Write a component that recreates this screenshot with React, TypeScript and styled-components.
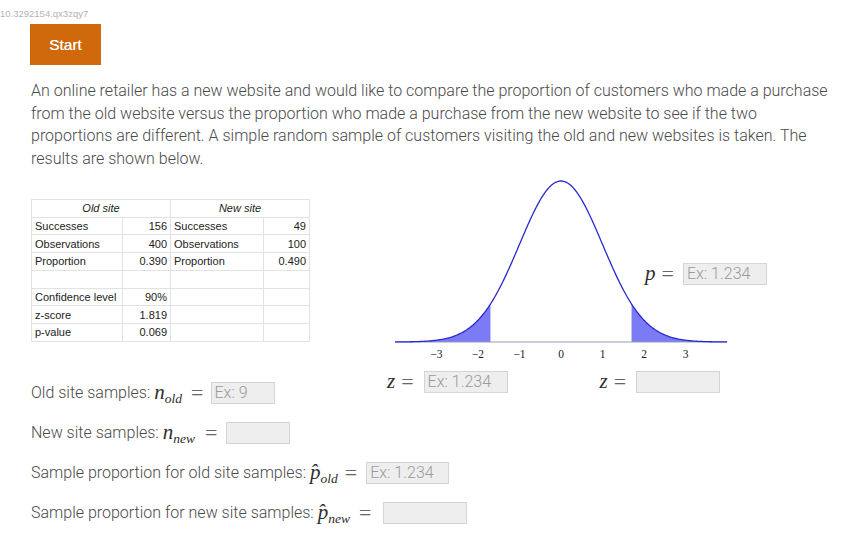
import React from "react";
import styled, { createGlobalStyle } from "styled-components";

const Global = createGlobalStyle`
  html, body { margin: 0; padding: 0; background: #fff; }
  body { font-family: Roboto, "Liberation Sans", Arial, sans-serif; }
`;

const Page = styled.div`
  width: 844px;
  box-sizing: border-box;
  padding: 0 12px 0 31px;
`;

const IdTag = styled.div`
  margin-left: -31px;
  padding-top: 8px;
  font-family: "Liberation Sans", Arial, sans-serif;
  font-size: 9.5px;
  line-height: 12px;
  color: #b3b3b3;
`;

const StartButton = styled.button`
  display: block;
  margin: 4px 0 0 -1px;
  width: 71px;
  height: 41px;
  border: none;
  background: #d0690b;
  color: #fff;
  font-family: "Liberation Sans", Arial, sans-serif;
  font-size: 15.5px;
  padding: 0;
  text-shadow: 0 0 0.4px #fff;
`;

const Intro = styled.p`
  margin: 15px 0 0;
  font-weight: 300;
  font-size: 16px;
  line-height: 22.7px;
  color: #4a4a4a;
`;

const Workspace = styled.div`
  display: flow-root;
`;

const Figure = styled.div`
  float: right;
  position: relative;
  width: 400px;
  margin: 4px 47px 0 0;
`;

const ChartSvg = styled.svg`
  display: block;
`;

const ZRow = styled.div`
  display: flex;
  gap: 92px;
  margin: 3px 0 0 2px;
`;

const MathPair = styled.div`
  display: flex;
  align-items: center;
`;

const Overlay = styled.div`
  position: absolute;
  left: 260px;
  top: 86px;
  display: flex;
  align-items: center;
`;

const DataTable = styled.table`
  margin-top: 28px;
  border-collapse: collapse;
  font-family: "Liberation Sans", Arial, sans-serif;
  font-size: 11px;
  color: #222;
  td {
    border: 1px solid #e2e2e2;
    height: 16.75px;
    padding: 0 3px;
    line-height: 14px;
  }
`;

const Cell = styled.td<{ $w?: number; $align?: string; $italic?: boolean }>`
  width: ${(p) => (p.$w ? `${p.$w - 7}px` : "auto")};
  text-align: ${(p) => p.$align || "left"};
  font-style: ${(p) => (p.$italic ? "italic" : "normal")};
`;

const Questions = styled.div`
  margin-top: 31px;
`;

const QRow = styled.div`
  display: flex;
  align-items: center;
  height: 40px;
  font-weight: 300;
  font-size: 16px;
  color: #4a4a4a;
`;

const MathVar = styled.span<{ $lead?: number }>`
  font-family: "Liberation Serif", "DejaVu Serif", serif;
  font-style: italic;
  font-size: 21px;
  color: #2e2e2e;
  margin-left: ${(p) => p.$lead ?? 4}px;
`;

const Sub = styled.sub`
  font-size: 13.5px;
  vertical-align: -4px;
  line-height: 0;
`;

const Eq = styled.span<{ $l?: number; $r?: number }>`
  font-family: "Liberation Serif", "DejaVu Serif", serif;
  font-size: 22px;
  color: #666;
  margin: 0 ${(p) => p.$r ?? 9}px 0 ${(p) => p.$l ?? 9}px;
`;

const AnswerBox = styled.input<{ $w: number }>`
  box-sizing: border-box;
  width: ${(p) => p.$w}px;
  height: 22px;
  background: #eeeeee;
  border: 1px solid #d4d4d4;
  padding: 0 3px;
  font-family: Roboto, "Liberation Sans", sans-serif;
  font-weight: 300;
  font-size: 16px;
  color: #555;
  &::placeholder { color: #9a9a9a; }
`;

const pdf = (z: number) => Math.exp(-(z * z) / 2) / Math.sqrt(2 * Math.PI);
const toX = (z: number) => 176 + 41.5 * z;
const BASE = 167;
const toY = (z: number) => BASE - 403.6 * pdf(z);

function pts(a: number, b: number) {
  const out: string[] = [];
  const n = Math.round((b - a) / 0.02);
  for (let i = 0; i <= n; i++) {
    const z = a + ((b - a) * i) / n;
    out.push(`${toX(z).toFixed(2)},${toY(z).toFixed(2)}`);
  }
  return out;
}

const CUT = 1.7;

function BellChart() {
  const curve = "M" + pts(-4, 4).join(" L");
  const left = `M${toX(-4)},${BASE} L` + pts(-4, -CUT).join(" L") + ` L${toX(-CUT)},${BASE} Z`;
  const right = `M${toX(CUT)},${BASE} L` + pts(CUT, 4).join(" L") + ` L${toX(4)},${BASE} Z`;
  const ticks = [-3, -2, -1, 0, 1, 2, 3];
  return (
    <ChartSvg width={400} height={191} viewBox="0 0 400 191">
      <path d={left} fill="#7b7bf5" />
      <path d={right} fill="#7b7bf5" />
      <line x1={toX(-4)} x2={toX(4)} y1={BASE} y2={BASE} stroke="#9a9ab8" strokeWidth={1} />
      <path d={curve} fill="none" stroke="#2a2ad0" strokeWidth={1.3} />
      {ticks.map((t) => (
        <text
          key={t}
          x={toX(t)}
          y={183}
          textAnchor="middle"
          fontFamily="'Liberation Serif', serif"
          fontSize={11.5}
          fill="#222"
        >
          {t < 0 ? `\u2212${-t}` : t}
        </text>
      ))}
    </ChartSvg>
  );
}

const rows: [string, string, string, string][] = [
  ["Successes", "156", "Successes", "49"],
  ["Observations", "400", "Observations", "100"],
  ["Proportion", "0.390", "Proportion", "0.490"],
  ["", "", "", ""],
  ["Confidence level", "90%", "", ""],
  ["z-score", "1.819", "", ""],
  ["p-value", "0.069", "", ""],
];

export default function App() {
  return (
    <>
      <Global />
      <Page>
        <IdTag>10.3292154.qx3zqy7</IdTag>
        <StartButton>Start</StartButton>
        <Intro>
          An online retailer has a new website and would like to compare the proportion of customers who made a purchase
          from the old website versus the proportion who made a purchase from the new website to see if the two
          proportions are different. A simple random sample of customers visiting the old and new websites is taken. The
          results are shown below.
        </Intro>
        <Workspace>
          <Figure>
            <BellChart />
            <Overlay>
              <MathVar $lead={0}>p</MathVar>
              <Eq $l={6} $r={9}>=</Eq>
              <AnswerBox $w={84} placeholder="Ex: 1.234" />
            </Overlay>
            <ZRow>
              <MathPair>
                <MathVar $lead={0}>z</MathVar>
                <Eq $l={6} $r={10}>=</Eq>
                <AnswerBox $w={84} placeholder="Ex: 1.234" />
              </MathPair>
              <MathPair>
                <MathVar $lead={0}>z</MathVar>
                <Eq $l={6} $r={10}>=</Eq>
                <AnswerBox $w={84} />
              </MathPair>
            </ZRow>
          </Figure>
          <DataTable>
            <tbody>
              <tr>
                <Cell colSpan={2} $align="center" $italic>Old site</Cell>
                <Cell colSpan={2} $align="center" $italic>New site</Cell>
              </tr>
              {rows.map((r, i) => (
                <tr key={i}>
                  <Cell $w={91}>{r[0]}</Cell>
                  <Cell $w={48} $align="right">{r[1]}</Cell>
                  <Cell $w={93}>{r[2]}</Cell>
                  <Cell $w={46} $align="right">{r[3]}</Cell>
                </tr>
              ))}
            </tbody>
          </DataTable>
          <Questions>
            <QRow>
              Old site samples:
              <MathVar>n<Sub>old</Sub></MathVar>
              <Eq $r={7}>=</Eq>
              <AnswerBox $w={64} placeholder="Ex: 9" />
            </QRow>
            <QRow>
              New site samples:
              <MathVar>n<Sub>new</Sub></MathVar>
              <Eq $l={10}>=</Eq>
              <AnswerBox $w={64} />
            </QRow>
            <QRow>
              Sample proportion for old site samples:
              <MathVar>p&#770;<Sub>old</Sub></MathVar>
              <Eq $l={7} $r={9}>=</Eq>
              <AnswerBox $w={83} placeholder="Ex: 1.234" />
            </QRow>
            <QRow>
              Sample proportion for new site samples:
              <MathVar>p&#770;<Sub>new</Sub></MathVar>
              <Eq $l={9} $r={12}>=</Eq>
              <AnswerBox $w={84} />
            </QRow>
          </Questions>
        </Workspace>
      </Page>
    </>
  );
}
